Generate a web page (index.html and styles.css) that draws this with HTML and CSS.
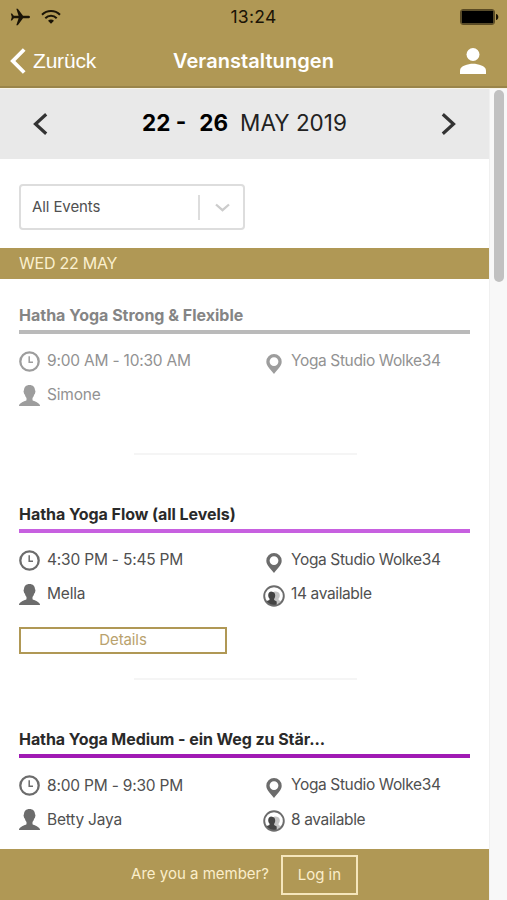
FILE: index.html
```html
<!DOCTYPE html>
<html lang="de">
<head>
<meta charset="utf-8">
<title>Veranstaltungen</title>
<link rel="stylesheet" href="styles.css">
</head>
<body>
<svg class="symbols" aria-hidden="true">
  <symbol id="clock" viewBox="0 0 21 21"><circle cx="10.500" cy="10.500" r="9.200" fill="none" stroke="currentColor" stroke-width="2.300"/><path d="M10.200 5.200v6h3.800" fill="none" stroke="currentColor" stroke-width="1.500"/></symbol>
  <symbol id="person" viewBox="0 0 21 21"><path d="M10.500 0C7 0 5 2.200 5 5.500c-.4 0-.5.600-.4 1.200l.5 2c.1.400.400.600.7.700.3 1.600.9 2.800 1.700 3.700v2.200C6 16.500 1 17.200 0 20.500V21h21v-.5c-1-3.300-6-4-7.500-5.200v-2.200c.8-.9 1.400-2.100 1.700-3.700.3-.1.600-.3.700-.7l.5-2c.1-.6 0-1.200-.4-1.200C16 2.200 14 0 10.500 0Z" fill="currentColor"/></symbol>
  <symbol id="pin" viewBox="0 0 16 20"><path d="M8 0a7.700 7.700 0 0 0-7.700 7.700C.3 12.500 5 15.500 8 20c3-4.500 7.700-7.500 7.700-12.300A7.700 7.700 0 0 0 8 0Zm0 3.200a4.400 4.400 0 1 1 0 8.800 4.400 4.400 0 0 1 0-8.800Z" fill="currentColor" fill-rule="evenodd"/></symbol>
  <symbol id="group" viewBox="0 0 22 22"><circle cx="11" cy="11" r="9.800" fill="#fff"/><path d="M11 6.800c1-.5 5.500-.8 5.800 3.200 0 1.800-.5 2.800-1.200 3.600v1.400l2.900 1.500-2.500 2.700H11Z" fill="#c4c4c4"/><path d="M8.700 6.800c2.400 0 3.500 1.500 3.500 3.700 0 1.500-.5 2.600-1.100 3.400V15l2.600 1.500v4L9 21l-5.500-3.500.3-1.500 2.700-1v-1.400c-.7-.8-1.300-1.900-1.300-3.400 0-2.200 1.200-3.700 3.500-3.700Z" fill="#444"/><circle cx="11" cy="11" r="9.800" fill="none" stroke="currentColor" stroke-width="1.900"/></symbol>
</svg>

<header class="app-header">
  <div class="status">
    <div class="signals">
      <svg width="20" height="18" viewBox="0 0 20 18"><path d="M20 9c0-.8-.8-1.300-2-1.300h-5L7.800.8H6.300l2.300 6.900H3.800L2 5.400H.8L1.800 9l-1 3.600H2l1.800-2.300h4.800l-2.300 6.900h1.500l5.200-6.900h5c1.200 0 2-.5 2-1.300Z" fill="#1b1406"/></svg>
      <svg width="20" height="16" viewBox="0 0 20 16"><g fill="none" stroke="#1b1406" stroke-width="2"><path d="M1 5.700c5-5 13-5 18 0"/><path d="M4.300 9.200c3.200-3.200 8.200-3.200 11.400 0"/></g><path d="M10 14.800l-3-3c1.700-1.600 4.300-1.600 6 0Z" fill="#1b1406"/></svg>
    </div>
    <span class="time">13:24</span>
    <svg class="battery" width="39" height="16" viewBox="0 0 39 16"><rect x=".5" y=".5" width="34" height="15" rx="2.500" fill="none" stroke="#5b4b24"/><rect x="1.500" y="1.500" width="32" height="13" rx="1" fill="#000"/><path d="M36 5c1.500.2 2.300 1.300 2.300 3S37.500 10.800 36 11Z" fill="#1b1406"/></svg>
  </div>
  <nav class="navbar">
    <div class="back">
      <svg width="16" height="26" viewBox="0 0 16 26"><path d="M14.200 1.500L2.800 13l11.400 11.500" fill="none" stroke="#fff" stroke-width="3.800"/></svg>
      <span>Zurück</span>
    </div>
    <h1>Veranstaltungen</h1>
    <svg class="profile" width="26" height="26" viewBox="0 0 26 26"><circle cx="13" cy="6.500" r="6.500" fill="#fff"/><path d="M0 26v-3.500C0 18 8 15.800 13 15.800S26 18 26 22.500V26Z" fill="#fff"/></svg>
  </nav>
</header>

<div class="viewport">
  <div class="page">
    <section class="dates">
      <svg width="15" height="22" viewBox="0 0 15 22"><path d="M13.200 1.300L2.500 11l10.700 9.700" fill="none" stroke="#333" stroke-width="3.200"/></svg>
      <div class="range"><b class="from">22 -</b><b class="to">26</b><span>MAY 2019</span></div>
      <svg width="15" height="22" viewBox="0 0 15 22"><path d="M1.800 1.300L12.500 11 1.800 20.700" fill="none" stroke="#333" stroke-width="3.200"/></svg>
    </section>

    <div class="filter">
      <div class="select">
        <span>All Events</span>
        <i></i>
        <svg width="15" height="9" viewBox="0 0 15 9"><path d="M1 1.500l6.500 5.700L14 1.500" fill="none" stroke="#ccc" stroke-width="2.300"/></svg>
      </div>
    </div>
    <div class="day"><span>WED 22 MAY</span></div>

    <main class="events">
      <article class="event past">
        <h2><span>Hatha Yoga Strong &amp; Flexible</span></h2>
        <div class="facts">
          <div class="fact"><svg class="icon"><use href="#clock"/></svg><span>9:00 AM - 10:30 AM</span></div>
          <div class="fact"><svg class="icon pin"><use href="#pin"/></svg><span class="studio">Yoga Studio Wolke34</span></div>
          <div class="fact"><svg class="icon"><use href="#person"/></svg><span>Simone</span></div>
        </div>
      </article>
      <article class="event flow">
        <h2><span>Hatha Yoga Flow (all Levels)</span></h2>
        <div class="facts">
          <div class="fact"><svg class="icon"><use href="#clock"/></svg><span>4:30 PM - 5:45 PM</span></div>
          <div class="fact"><svg class="icon pin"><use href="#pin"/></svg><span class="studio">Yoga Studio Wolke34</span></div>
          <div class="fact"><svg class="icon"><use href="#person"/></svg><span>Mella</span></div>
          <div class="fact"><svg class="icon group"><use href="#group"/></svg><span class="seats">14 available</span></div>
        </div>
        <button class="details"><span>Details</span></button>
      </article>
      <article class="event medium">
        <h2><span>Hatha Yoga Medium - ein Weg zu Stär...</span></h2>
        <div class="facts">
          <div class="fact low"><svg class="icon"><use href="#clock"/></svg><span>8:00 PM - 9:30 PM</span></div>
          <div class="fact"><svg class="icon pin"><use href="#pin"/></svg><span class="studio">Yoga Studio Wolke34</span></div>
          <div class="fact low"><svg class="icon"><use href="#person"/></svg><span>Betty Jaya</span></div>
          <div class="fact low"><svg class="icon group"><use href="#group"/></svg><span class="seats">8 available</span></div>
        </div>
      </article>
    </main>
    <footer class="member"><span>Are you a member?</span><button class="login">Log in</button></footer>
  </div>
  <div class="track"><div class="thumb"></div></div>
</div>
</body>
</html>
```
FILE: styles.css
```css
* { box-sizing: border-box; }
body {
  margin: 0;
  width: 507px;
  height: 900px;
  overflow: hidden;
  display: flex;
  flex-direction: column;
  background: #fff;
  color: #505050;
  font: 16px/20px Inter, "Liberation Sans", sans-serif;
}
h1, h2 { margin: 0; }
svg { display: block; flex: none; }
span, b { white-space: nowrap; }
button { font: inherit; background: none; border-radius: 0; padding: 0; }
.symbols { position: absolute; width: 0; height: 0; }

.app-header { height: 88px; flex: none; background: #b09855; border-bottom: 2px solid #9a854a; box-shadow: 0 1px 0 #f8f4e8; z-index: 1; }
.status, .navbar { display: grid; grid-template-columns: 1fr auto 1fr; align-items: center; }
.status { height: 34px; padding: 0 8px 0 10px; }
.signals { display: flex; align-items: center; gap: 11px; }
.time { margin-left: -2px; font-size: 17.5px; color: #1b1406; letter-spacing: .3px; }
.battery { justify-self: end; }
.navbar { height: 54px; padding: 0 10px; color: #fff; }
.back { display: flex; align-items: center; gap: 7px; font: 21px/26px "Liberation Sans", sans-serif; letter-spacing: -.2px; }
.navbar h1 { font-size: 20px; font-weight: 600; line-height: 26px; letter-spacing: .07px; }
.profile { justify-self: end; margin-right: 11px; margin-top: -1px; }

.viewport { flex: 1; display: flex; min-height: 0; }
.page { width: 489px; display: flex; flex-direction: column; }
.dates { height: 71px; flex: none; background: #e9e9e9; display: flex; justify-content: space-between; padding: 25px 33px 0; }
.range { display: flex; margin-top: -3px; font-size: 22.5px; line-height: 25px; color: #222; }
.range b { color: #000; font-weight: 700; }
.from { margin-right: 13px; }
.to { margin-right: 12px; }

.filter { padding: 25px 19px 18px; }
.select { width: 226px; height: 46px; border: 2px solid #ddd; border-radius: 4px; display: flex; align-items: center; padding: 0 13px 0 11px; font-size: 15px; letter-spacing: -.1px; }
.select i { width: 2px; height: 25px; background: #ddd; margin-left: auto; margin-right: 15px; }
.day { height: 31px; flex: none; background: #b09855; color: #fbf0cf; padding: 5px 19px 0; letter-spacing: -.25px; }

.events { flex: 1; padding: 16px 19px 0; }
.event { display: flex; flex-direction: column; position: relative; }
.event h2 { height: 39px; padding-top: 10px; font-size: 16px; line-height: 20px; font-weight: 700; color: #2a2a2a; border-bottom: 4px solid; }
.past { height: 199px; color: #929292; }
.event.past h2 { color: #858585; border-color: #bababa; }
.flow { height: 225px; }
.flow h2 { border-color: #c760e0; letter-spacing: -.05px; }
.medium h2 { border-color: #a01ab4; letter-spacing: -.07px; }
.past::after, .flow::after { content: ""; position: absolute; left: 115px; bottom: 39px; width: 223px; height: 2px; background: #f5f5f5; }
.facts { display: grid; grid-template-columns: 244px 1fr; grid-auto-rows: 20px; row-gap: 14px; padding-top: 17px; }
.fact { display: flex; align-items: center; gap: 7px; font-size: 15.5px; letter-spacing: -.2px; }
.low span { padding-top: 1px; }
.studio, .seats { letter-spacing: -.37px; }
.icon { width: 21px; height: 21px; color: #6c6c6c; }
.past .icon { color: #9d9d9d; }
.pin { width: 16px; height: 20px; margin: 5px 2px 0 3px; }
.group { width: 22px; height: 22px; margin: 3px -1px 0 0; }
.details { width: 208px; height: 27px; margin-top: 23px; border: 2px solid #b09855; color: #b9a26d; font-size: 15px; line-height: 21px; letter-spacing: -.1px; padding-bottom: 2px; }

.member { height: 51px; flex: none; background: #b09855; color: #fbeecb; display: flex; align-items: center; justify-content: center; gap: 12px; font-size: 15px; }
.member span { padding-bottom: 2px; }
.login { width: 77px; height: 40px; border: 2px solid #f5e6bc; color: #fbeecb; }
.track { width: 18px; background: #f8f8f8; border-left: 1px solid #f0f0f0; padding: 2px 3px 0 4px; }
.thumb { width: 10px; height: 192px; border-radius: 5px; background: #c1c1c1; }
```
